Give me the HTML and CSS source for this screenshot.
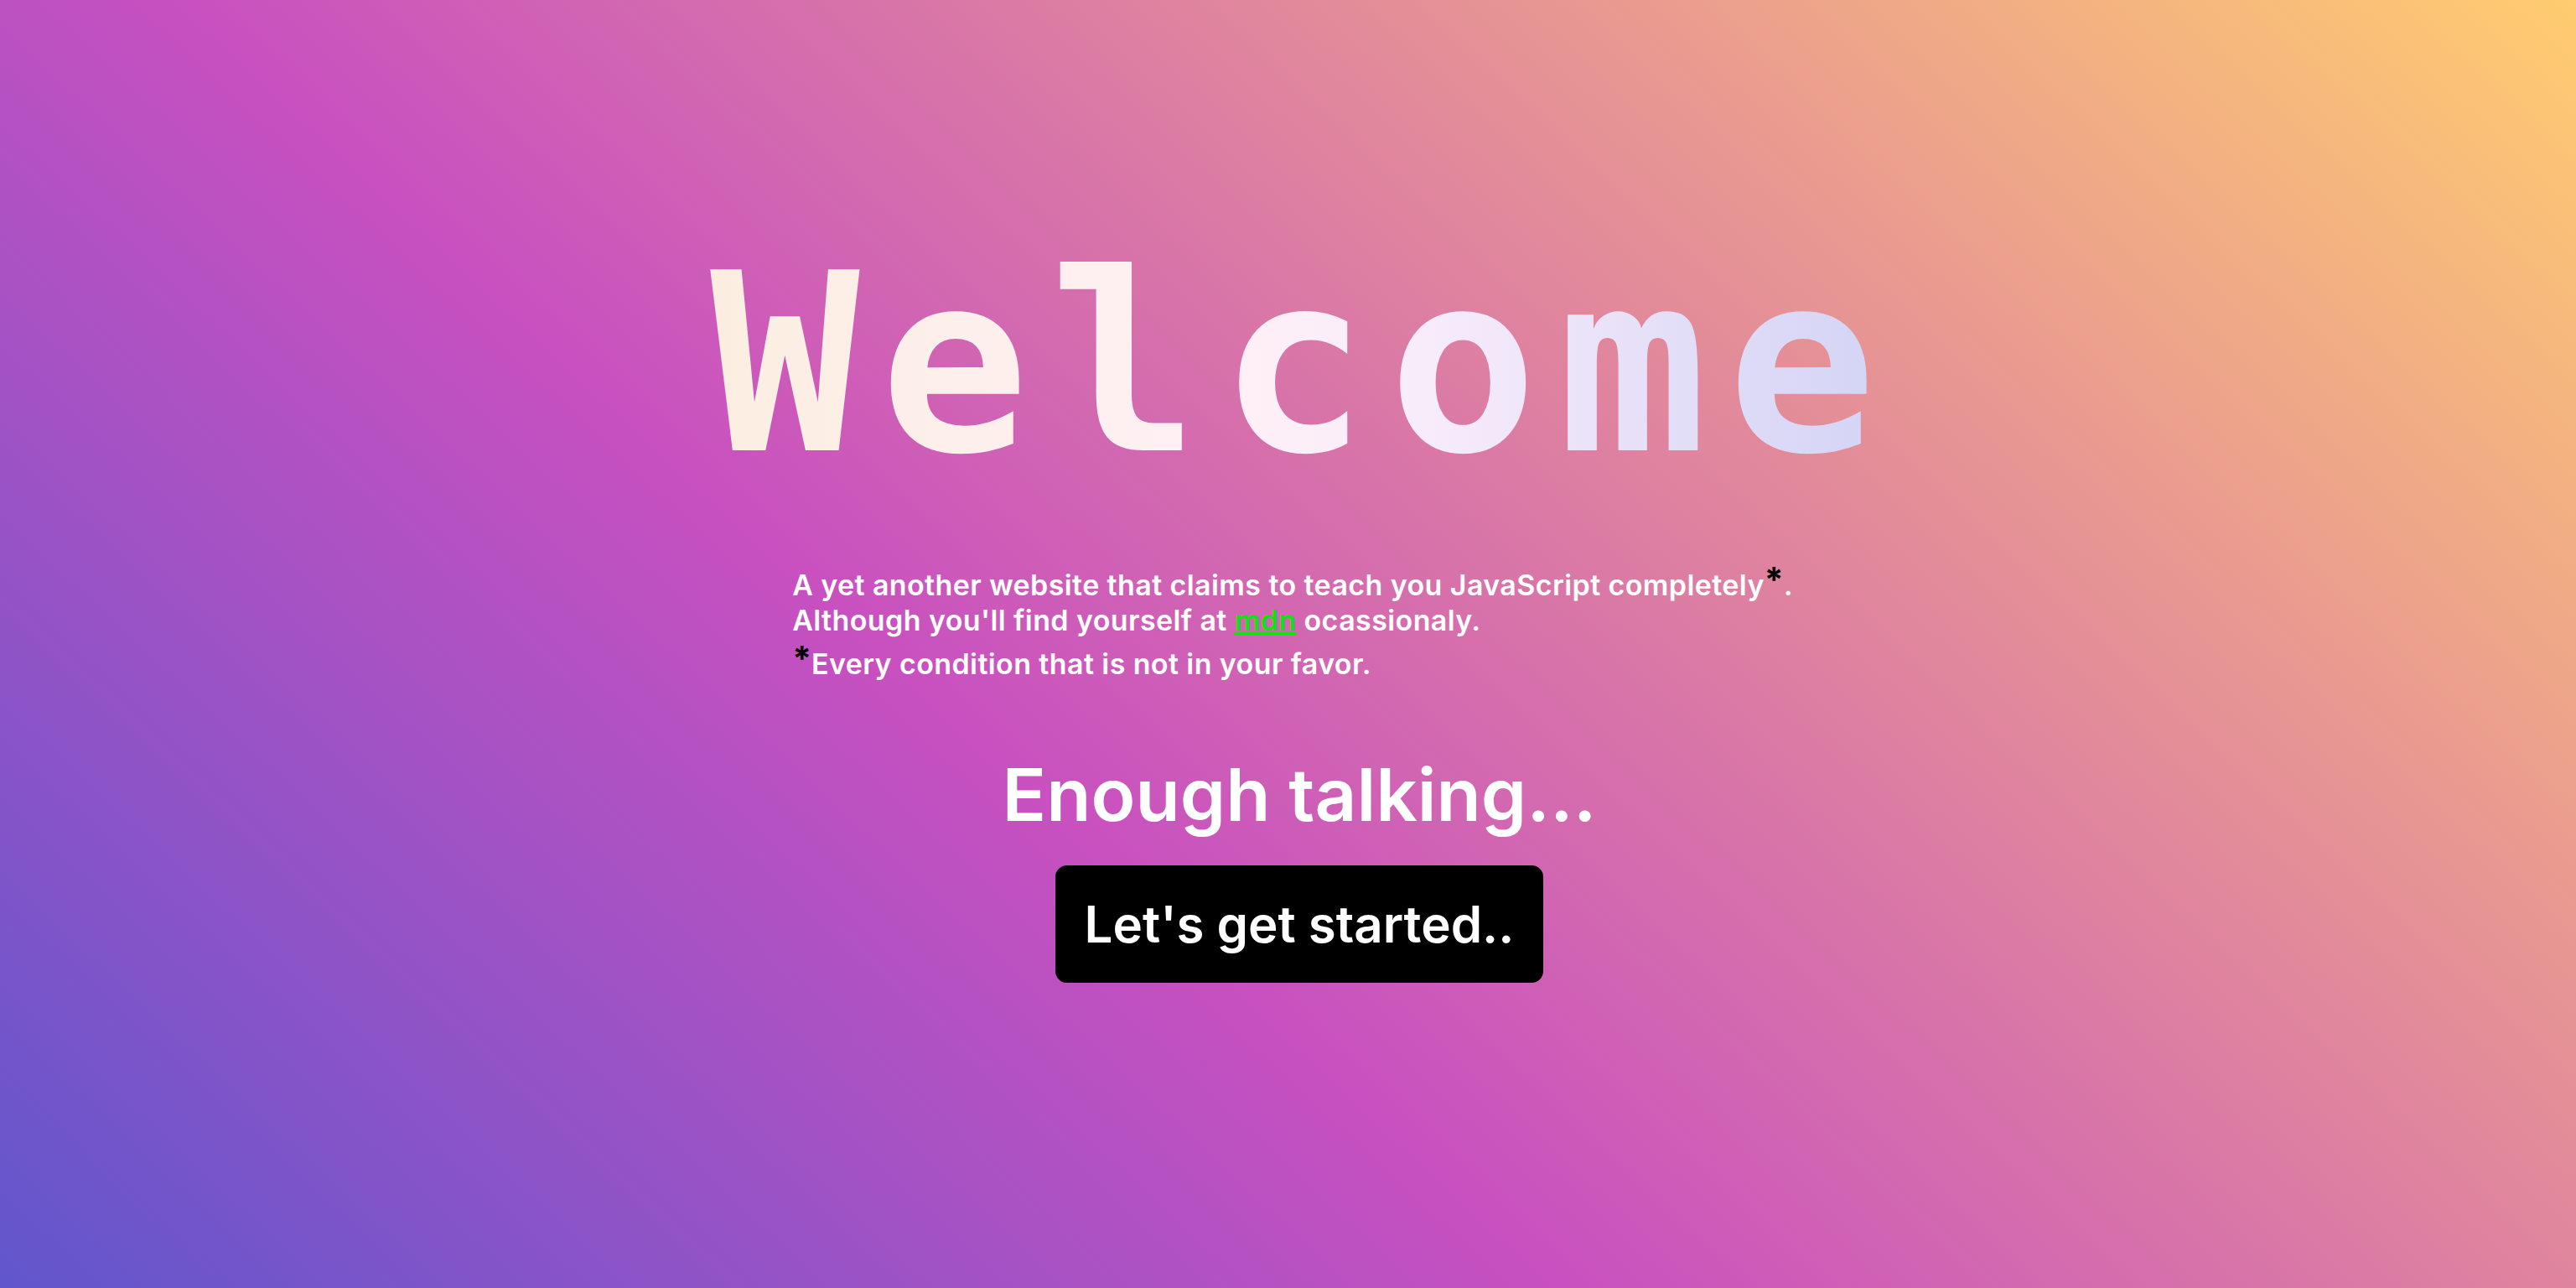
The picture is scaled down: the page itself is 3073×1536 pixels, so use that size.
FILE: index.html
```html
<!DOCTYPE html>
<html lang="en">
<head>
<meta charset="utf-8">
<title>Welcome</title>
<link rel="stylesheet" href="styles.css">
</head>
<body>
<main class="page">
  <h1 class="title">Welcome</h1>
  <div class="intro">
    <p class="intro-text">A yet another website that claims to teach you JavaScript completely<sup class="star">*</sup>.<br>Although you'll find yourself at <a href="#" class="mdn">mdn</a> ocassionaly.</p>
    <p class="footnote"><sup class="star">*</sup>Every condition that is not in your favor.</p>
  </div>
  <h2 class="cta-title">Enough talking...</h2>
  <button class="cta" type="button">Let's get started..</button>
</main>
</body>
</html>
```
FILE: styles.css
```css
html, body {
  margin: 0;
  padding: 0;
  height: 100%;
}

body {
  background: linear-gradient(43deg, #4158D0 -12.1%, #C850C0 39.5%, #FFCC70 100%);
  font-family: "Inter", "Open Sans", sans-serif;
  color: #ffffff;
  overflow: hidden;
}

.page {
  min-height: 100%;
  box-sizing: border-box;
  display: flex;
  flex-direction: column;
  align-items: center;
  padding-top: 262px;
  padding-left: 27px;
}

.title {
  margin: 0;
  font-family: "DejaVu Sans Mono", monospace;
  font-weight: bold;
  font-size: 296px;
  line-height: normal;
  letter-spacing: 24px;
  padding-left: 10px;
  background: linear-gradient(90deg, #fbeee0 0%, #fff0f6 45%, #f8ecfb 60%, #d2d3f5 100%);
  -webkit-background-clip: text;
  background-clip: text;
  color: transparent;
}

.intro {
  margin-top: 70px;
  margin-right: 16px;
  width: fit-content;
  font-weight: 600;
  font-size: 34px;
  letter-spacing: 0.4px;
  line-height: 42px;
}

.intro-text,
.footnote {
  margin: 0;
}

.footnote {
  margin-top: 10px;
}

.star {
  color: #000000;
  font-size: 1.2em;
  line-height: 0;
  vertical-align: 0.1em;
  font-weight: 700;
  letter-spacing: 0;
}

.mdn {
  color: #14e014;
  text-decoration: underline;
  text-decoration-thickness: 3px;
}

.cta-title {
  margin: 82px 0 0;
  font-size: 87px;
  font-weight: 600;
  line-height: normal;
}

.cta {
  margin-top: 32px;
  background: #000000;
  color: #ffffff;
  border: none;
  border-radius: 14px;
  padding: 34px 35px;
  font-family: "Inter", "Open Sans", sans-serif;
  font-size: 60px;
  font-weight: 600;
  line-height: normal;
  cursor: pointer;
}
```
